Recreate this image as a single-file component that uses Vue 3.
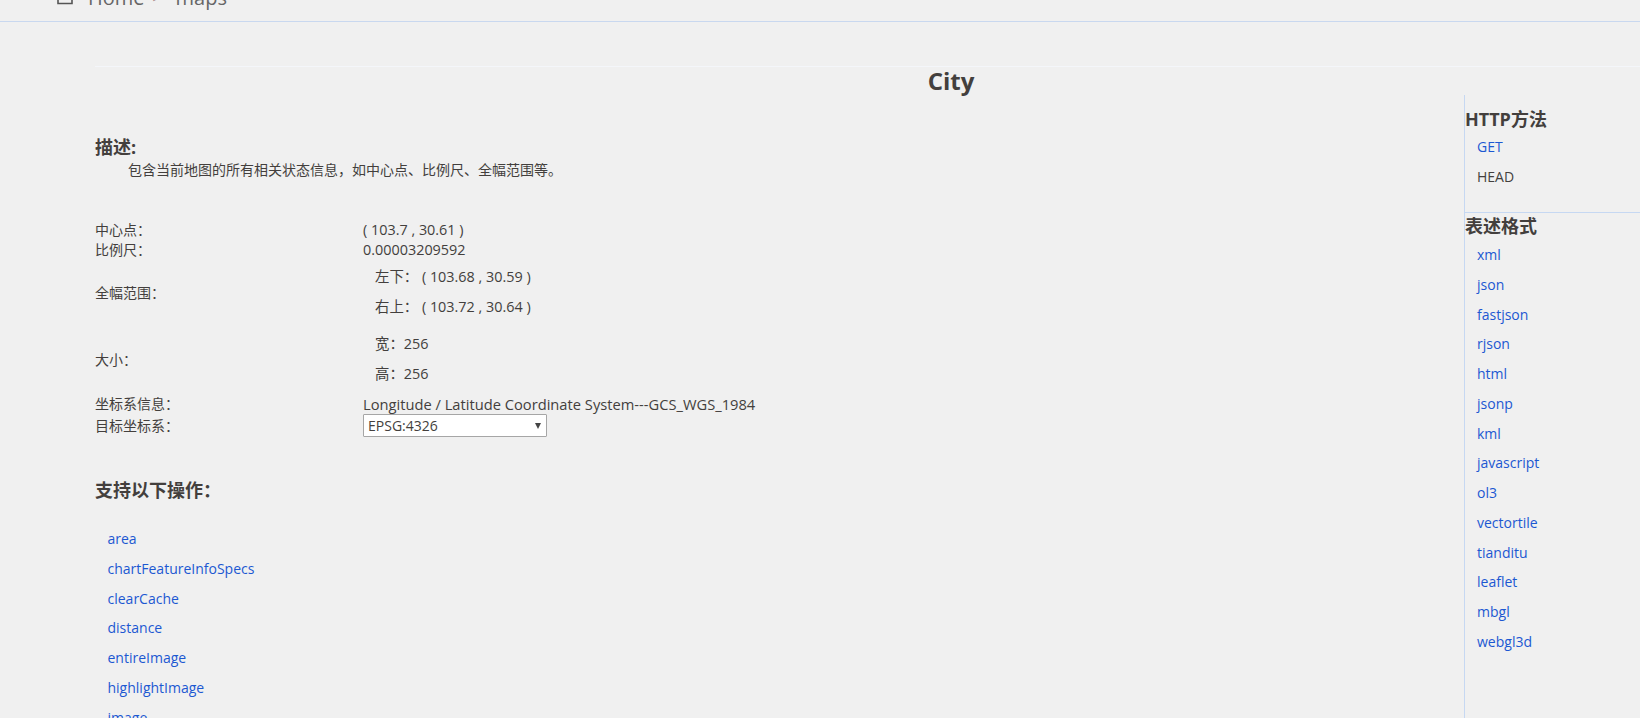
<script setup>
const methods = [
  { name: 'GET', link: true },
  { name: 'HEAD', link: false }
]
const formats = ['xml', 'json', 'fastjson', 'rjson', 'html', 'jsonp', 'kml', 'javascript', 'ol3', 'vectortile', 'tianditu', 'leaflet', 'mbgl', 'webgl3d']
const ops = ['area', 'chartFeatureInfoSpecs', 'clearCache', 'distance', 'entireImage', 'highlightImage', 'image']
</script>

<template>
  <div class="page">
    <header class="crumb">
      <svg class="home" width="18" height="8" viewBox="0 0 18 8"><path d="M2 0v3.5h14V0" fill="none" stroke="#555" stroke-width="1.6"/></svg>
      <span class="crumb-text">Home</span><span class="sep">&gt;</span><span class="crumb-text">maps</span>
    </header>
    <div class="body">
      <main class="main">
        <hr class="rule" />
        <h1 class="title">City</h1>
        <h2 class="desc-h">描述:</h2>
        <p class="desc">包含当前地图的所有相关状态信息，如中心点、比例尺、全幅范围等。</p>
        <div class="info">
          <div class="row"><div class="label">中心点：</div><div>( 103.7 , 30.61 )</div></div>
          <div class="row"><div class="label">比例尺：</div><div>0.00003209592</div></div>
          <div class="row"><div class="label">全幅范围：</div>
            <div class="subs extent"><div>左下： ( 103.68 , 30.59 )</div><div>右上： ( 103.72 , 30.64 )</div></div></div>
          <div class="row size"><div class="label">大小：</div>
            <div class="subs"><div>宽：256</div><div>高：256</div></div></div>
          <div class="row"><div class="label">坐标系信息：</div><div class="crs">Longitude / Latitude Coordinate System---GCS_WGS_1984</div></div>
          <div class="row"><div class="label">目标坐标系：</div>
            <div class="select"><span>EPSG:4326</span><span class="arrow"></span></div></div>
        </div>
        <h2 class="ops-h">支持以下操作：</h2>
        <ul class="ops">
          <li v-for="o in ops" :key="o"><a>{{ o }}</a></li>
        </ul>
      </main>
      <aside class="side">
        <h3>HTTP方法</h3>
        <ul class="side-list first">
          <li v-for="m in methods" :key="m.name" :class="{ plain: !m.link }">{{ m.name }}</li>
        </ul>
        <h3 class="fmt">表述格式</h3>
        <ul class="side-list">
          <li v-for="f in formats" :key="f">{{ f }}</li>
        </ul>
      </aside>
    </div>
  </div>
</template>

<style>
html, body { margin: 0; background: #f0f0f0; overflow: hidden; }
</style>

<style scoped>
.page {
  height: 718px;
  overflow: hidden;
  background: #f0f0f0;
  color: #433f3d;
  font-family: "Open Sans", "Noto Sans CJK SC", sans-serif;
  font-size: 14px;
}
.crumb {
  height: 21px;
  box-sizing: content-box;
  border-bottom: 1px solid #c9d8ef;
  display: flex;
  align-items: flex-start;
  padding-left: 56px;
  overflow: hidden;
  font-size: 20px;
  line-height: 20px;
  color: #666;
}
.home { margin-right: 14px; flex: none; }
.crumb-text { white-space: nowrap; margin-top: -12px; }
.sep { margin: -12px 15px 0 8px; color: #a88; font-size: 14px; }
.body { display: flex; align-items: flex-start; }
.main { flex: 1; min-width: 0; padding-left: 95px; }
.rule { margin: 44px -176px 0 0; border: 0; height: 1px; background: #f4f6fa; }
.title {
  margin: 0;
  font-size: 24px;
  line-height: 27px;
  font-weight: 700;
  text-align: center;
  padding-left: 343px;
  white-space: nowrap;
}
.desc-h { margin: 41px 0 0; font-size: 18px; line-height: 25px; font-weight: 700; }
.desc { margin: 0; font-size: 14px; line-height: 20px; padding-left: 33px; }
.info { margin-top: 40px; font-size: 14.4px; }
.row { display: flex; align-items: center; min-height: 20px; line-height: 20px; }
.label { width: 268px; flex: none; font-size: 14px; }
.subs { padding: 3px 0 3px 12px; }
.subs.extent { padding-top: 2px; }
.subs div { line-height: 30px; }
.size { margin-top: 1px; }
.size .subs { padding-bottom: 5px; }
.crs { font-size: 14.7px; }
.select {
  width: 184px;
  height: 23px;
  box-sizing: border-box;
  background: #fff;
  border: 1px solid #a6a6a6;
  border-radius: 1px;
  padding-left: 4px;
  display: flex;
  align-items: center;
  justify-content: space-between;
  color: #433f3d;
  font-size: 14px;
}
.arrow {
  margin-right: 5px;
  border-left: 3.5px solid transparent;
  border-right: 3.5px solid transparent;
  border-top: 6px solid #444;
}
.ops-h { margin: 40px 0 0; font-size: 18px; line-height: 26px; font-weight: 700; }
.ops { list-style: none; margin: 21px 0 0; padding: 0 0 0 12.5px; }
.ops li { line-height: 29.75px; color: #1c58d2; white-space: nowrap; }
.side {
  width: 175px;
  flex: none;
  margin-top: 73px;
  height: 700px;
  border-left: 1px solid #c6d8f2;
}
.side h3 { margin: 11px 0 0; font-size: 18px; line-height: 26px; font-weight: 700; white-space: nowrap; }
.side h3.fmt { margin-top: 0; border-top: 1px solid #c6d8f2; line-height: 27px; }
.side-list { list-style: none; margin: 0; padding: 0 0 0 12px; color: #1c58d2; }
.side-list.first { padding-bottom: 20px; }
.side-list li { line-height: 29.75px; }
.side-list.first li { line-height: 30px; }
.side-list li.plain { color: #433f3d; }
</style>
